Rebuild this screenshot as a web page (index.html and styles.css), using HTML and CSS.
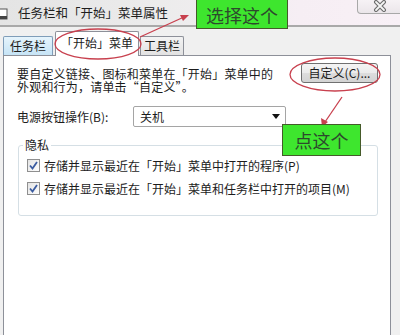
FILE: index.html
```html
<!DOCTYPE html>
<html lang="zh-CN">
<head>
<meta charset="utf-8">
<title>任务栏和「开始」菜单属性</title>
<link rel="stylesheet" href="styles.css">
</head>
<body>
<div class="window">
  <div class="titlebar">
    <svg class="app-icon" width="9" height="12" viewBox="0 0 9 12"><rect x="0" y="1" width="8" height="10" fill="#fff" stroke="#555" stroke-width="1"/><rect x="0" y="8" width="8" height="3" fill="#444"/></svg>
    <span class="title">任务栏和「开始」菜单属性</span>
    <div class="close">
      <svg width="14" height="12" viewBox="0 0 14 12"><path d="M3 2 L11 10 M11 2 L3 10" stroke="#6b6b6b" stroke-width="4" stroke-linecap="round"/><path d="M3 2 L11 10 M11 2 L3 10" stroke="#f4f4f4" stroke-width="1.8" stroke-linecap="round"/></svg>
    </div>
  </div>
  <div class="body">
    <div class="tabs">
      <div class="tab tab-hover">任务栏</div>
      <div class="tab tab-sel">「开始」菜单</div>
      <div class="tab tab-last">工具栏</div>
    </div>
    <div class="panel">
      <div class="row-intro">
        <p class="intro">要自定义链接、图标和菜单在「开始」菜单中的<br>外观和行为，请单击“自定义”。</p>
        <div class="button">自定义(C)...</div>
      </div>
      <div class="row-power">
        <span class="label">电源按钮操作(B):</span>
        <div class="select">
          <span>关机</span>
          <svg width="8" height="5" viewBox="0 0 8 5"><path d="M0 0 H8 L4 5 Z" fill="#111"/></svg>
        </div>
      </div>
      <fieldset class="group">
        <legend>隐私</legend>
        <div class="check-row">
          <span class="checkbox"><svg width="11" height="11" viewBox="0 0 11 11"><path d="M2 5.5 L4.5 8.5 L9 2" fill="none" stroke="#3a5ba0" stroke-width="1.8"/></svg></span>
          <span>存储并显示最近在「开始」菜单中打开的程序(P)</span>
        </div>
        <div class="check-row">
          <span class="checkbox"><svg width="11" height="11" viewBox="0 0 11 11"><path d="M2 5.5 L4.5 8.5 L9 2" fill="none" stroke="#3a5ba0" stroke-width="1.8"/></svg></span>
          <span>存储并显示最近在「开始」菜单和任务栏中打开的项目(M)</span>
        </div>
      </fieldset>
    </div>
  </div>

  <svg class="marks" width="400" height="335" viewBox="0 0 400 335">
    <ellipse cx="98" cy="44" rx="43" ry="15" fill="none" stroke="#c8404e" stroke-width="1.3"/>
    <ellipse cx="335" cy="74.5" rx="45" ry="16.5" fill="none" stroke="#c8404e" stroke-width="1.3"/>
    <line x1="140" y1="37" x2="184" y2="17" stroke="#c8404e" stroke-width="1.3"/>
    <polygon points="189,15 180,15 183,21" fill="#c8404e"/>
    <line x1="342" y1="97" x2="325" y2="122" stroke="#c8404e" stroke-width="1.3"/>
    <polygon points="322,127 321,118 328,122" fill="#c8404e"/>
  </svg>
  <div class="note note-top">选择这个</div>
  <div class="note note-mid">点这个</div>
</div>
</body>
</html>
```
FILE: styles.css
```css
html, body {
  margin: 0;
  padding: 0;
}
body {
  font-family: "Noto Sans CJK SC", "Liberation Sans", sans-serif;
  color: #1c1c1c;
  background: #f0f0f0;
}
.window {
  position: relative;
  width: 400px;
  height: 335px;
  overflow: hidden;
  background: #f0f0f0;
}
.titlebar {
  height: 25px;
  display: flex;
  align-items: center;
  background: linear-gradient(90deg, #e4e4e4 0%, #ececec 40%, #f6eef4 75%, #f8f0f6 100%);
  border-bottom: 2px solid #a9a9a9;
}
.app-icon {
  margin-left: -1px;
  margin-top: 2px;
}
.title {
  margin-left: 10px;
  font-size: 12.5px;
  line-height: 14px;
  color: #1e1e1e;
}
.close {
  margin-left: auto;
  align-self: flex-start;
  width: 48px;
  height: 15px;
  margin-top: -1px;
  margin-right: -5px;
  border: 1px solid #a8a8a8;
  border-top: none;
  border-radius: 0 0 4px 4px;
  background: linear-gradient(#f7f3f6, #ebe6ea);
  display: flex;
  align-items: center;
  padding-left: 15px;
  box-sizing: border-box;
}
.body {
  padding: 4px 0 0 3px;
  height: 308px;
  display: flex;
  flex-direction: column;
}
.tabs {
  display: flex;
  align-items: flex-end;
  height: 24px;
  position: relative;
  z-index: 1;
}
.tab {
  font-size: 12px;
  line-height: 18px;
  height: 18px;
  padding: 0 6px;
  border: 1px solid #8d9099;
  border-bottom: none;
  background: linear-gradient(#f3f3f3, #e2e2e2);
  border-radius: 2px 2px 0 0;
  margin-bottom: 0;
}
.tab-hover {
  background: linear-gradient(#e6f4fc, #c6e4f6);
  border-color: #7f9db9;
}
.tab-sel {
  margin-left: 2px;
  padding: 0 5px;
  height: 24px;
  line-height: 22px;
  background: #fff;
  margin-bottom: -1px;
}
.tab-last {
  margin-left: 1px;
  padding: 0 3px;
}
.panel {
  flex: 1;
  width: 388px;
  box-sizing: border-box;
  background: #fff;
  border: 1px solid #8d9099;
  border-bottom: none;
  padding: 7px 12px 0 13px;
}
.row-intro {
  display: flex;
  justify-content: space-between;
  align-items: flex-start;
}
.intro {
  margin: 4px 0 0 0;
  font-size: 12px;
  line-height: 13px;
  letter-spacing: 0.2px;
}
.button {
  width: 77px;
  height: 20px;
  box-sizing: border-box;
  border: 1px solid #707070;
  border-radius: 3px;
  background: linear-gradient(#f4f4f4 0%, #ebebeb 50%, #dddddd 51%, #d3d3d3 100%);
  font-size: 12px;
  line-height: 18px;
  text-align: center;
  white-space: nowrap;
}
.row-power {
  display: flex;
  align-items: center;
  margin-top: 13px;
  font-size: 12px;
}
.label {
  width: 116px;
}
.select {
  width: 153px;
  height: 21px;
  box-sizing: border-box;
  border: 1px solid #a5a5a5;
  border-radius: 2px;
  background: #fff;
  display: flex;
  align-items: center;
  justify-content: space-between;
  padding: 0 5px 0 6px;
  font-size: 12px;
}
.group {
  margin: 12px 0 0 1px;
  padding: 3px 8px 15px 8px;
  border: 1px solid #d5dfe5;
  border-radius: 3px;
  min-inline-size: 0;
}
.group legend {
  font-size: 12px;
  line-height: 12px;
  padding: 0 2px;
  margin-left: -4px;
}
.check-row {
  display: flex;
  align-items: center;
  height: 23px;
  font-size: 12px;
  white-space: nowrap;
}
.checkbox {
  width: 13px;
  height: 13px;
  box-sizing: border-box;
  border: 1px solid #8f8f8f;
  background: linear-gradient(135deg, #e4e4e4, #fdfdfd);
  display: flex;
  align-items: center;
  justify-content: center;
  margin-right: 4px;
}
.marks {
  position: absolute;
  left: 0;
  top: 0;
  pointer-events: none;
  z-index: 3;
}
.note {
  position: absolute;
  z-index: 4;
  background: #3ee62e;
  border: 1px solid #455a2a;
  color: #2d4a2d;
  font-size: 18px;
  line-height: 18px;
  display: flex;
  align-items: center;
  justify-content: center;
  box-sizing: border-box;
}
.note-top {
  left: 196px;
  top: -1px;
  width: 92px;
  height: 30px;
  padding-top: 1px;
}
.note-mid {
  left: 282px;
  top: 124px;
  width: 79px;
  height: 32px;
}
```
